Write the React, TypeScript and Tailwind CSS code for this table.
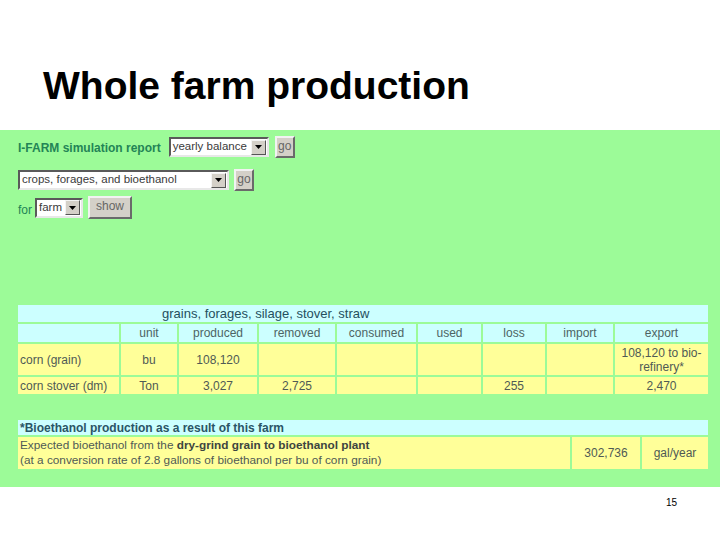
const font = { fontFamily: '"Liberation Sans", Arial, sans-serif' };

function Select({ label, width }: { label: string; width: string }) {
  return (
    <div
      className={`flex h-[20px] ${width} items-center border-2 border-t-[#5a5a5a] border-l-[#5a5a5a] border-r-[#e8e8e8] border-b-[#e8e8e8] bg-white`}
    >
      <span className="flex-1 overflow-hidden whitespace-nowrap pl-[2px] text-[11.5px] leading-none text-[#3a3a3a]">
        {label}
      </span>
      <span className="mr-[1px] flex h-[15px] w-[15px] shrink-0 items-center justify-center border border-t-[#f4f4f4] border-l-[#f4f4f4] border-r-[#555] border-b-[#555] bg-[#d4d0c8]">
        <svg width="7" height="4" viewBox="0 0 7 4">
          <path d="M0 0h7L3.5 4z" fill="#000" />
        </svg>
      </span>
    </div>
  );
}

function Button({ label, className }: { label: string; className: string }) {
  return (
    <div
      className={`flex items-center justify-center border-2 border-t-[#f2f2f2] border-l-[#f2f2f2] border-r-[#6a6a6a] border-b-[#6a6a6a] bg-[#d4d0c8] text-[12px] leading-none text-[#666] ${className}`}
    >
      <span className="-mt-[3px]">{label}</span>
    </div>
  );
}

const cols = ["", "unit", "produced", "removed", "consumed", "used", "loss", "import", "export"];

const rows = [
  ["corn (grain)", "bu", "108,120", "", "", "", "", "", "108,120 to bio-\nrefinery*"],
  ["corn stover (dm)", "Ton", "3,027", "2,725", "", "", "255", "", "2,470"],
];

export default function App() {
  return (
    <div className="h-[540px] w-[720px] overflow-hidden bg-white" style={font}>
      <div className="h-[130px] pl-[43px] pt-[66px]">
        <h1 className="text-[39px] font-bold leading-none text-black">
          Whole farm production
        </h1>
      </div>

      <div className="h-[357px] bg-[#9cfb98] px-[18px]">
        <div className="flex items-center pt-[6px]">
          <span className="mr-[8px] mt-[2px] text-[12px] font-bold text-[#238456]">
            I-FARM simulation report
          </span>
          <Select label="yearly balance" width="w-[100px]" />
          <Button label="go" className="ml-[6px] h-[22px] w-[20px]" />
        </div>

        <div className="mt-[11px] flex items-center">
          <Select label="crops, forages, and bioethanol" width="w-[211px]" />
          <Button label="go" className="ml-[5px] h-[22px] w-[20px]" />
        </div>

        <div className="mt-[5px] flex items-center">
          <span className="mr-[3px] mt-[4px] text-[12px] text-[#238456]">for</span>
          <Select label="farm" width="w-[48px]" />
          <Button label="show" className="ml-[5px] h-[23px] w-[44px]" />
        </div>

        <div
          className="mt-[86px] grid gap-[2px] text-[12px] leading-[14px] text-[#4f5a55]"
          style={{ gridTemplateColumns: "101px 56px 78px 76px 79px 63px 62px 66px 93px" }}
        >
          <div className="col-span-9 flex h-[17px] items-center bg-[#ccffff] pl-[144px] text-[13px] text-[#24505e]">
            grains, forages, silage, stover, straw
          </div>
          {cols.map((c, i) => (
            <div key={i} className="flex h-[18px] items-center justify-center bg-[#ccffff] text-[#4d6464]">
              {c}
            </div>
          ))}
          {rows.map((r, ri) =>
            r.map((v, i) => (
              <div
                key={`${ri}-${i}`}
                className={`flex items-center whitespace-pre-line bg-[#ffff99] ${
                  i === 0 ? "pl-[2px]" : "justify-center text-center"
                } ${ri === 0 ? "h-[31px]" : "h-[17px]"}`}
              >
                {v}
              </div>
            ))
          )}
        </div>

        <div
          className="mt-[26px] grid gap-[2px] text-[12px] text-[#4f5a55]"
          style={{ gridTemplateColumns: "552px 68px 66px" }}
        >
          <div className="col-span-3 flex h-[15px] items-center bg-[#ccffff] pl-[2px] text-[12px] font-bold text-[#2a5566]">
            *Bioethanol production as a result of this farm
          </div>
          <div className="flex h-[32px] flex-col justify-center bg-[#ffff99] pl-[2px] text-[11.8px] leading-[15px]">
            <span>
              Expected bioethanol from the{" "}
              <b className="text-[#3d4540]">dry-grind grain to bioethanol plant</b>
            </span>
            <span>(at a conversion rate of 2.8 gallons of bioethanol per bu of corn grain)</span>
          </div>
          <div className="flex items-center justify-center bg-[#ffff99]">302,736</div>
          <div className="flex items-center justify-center bg-[#ffff99]">gal/year</div>
        </div>
      </div>

      <div className="pl-[666px] pt-[8px] text-[10px] text-black">15</div>
    </div>
  );
}
